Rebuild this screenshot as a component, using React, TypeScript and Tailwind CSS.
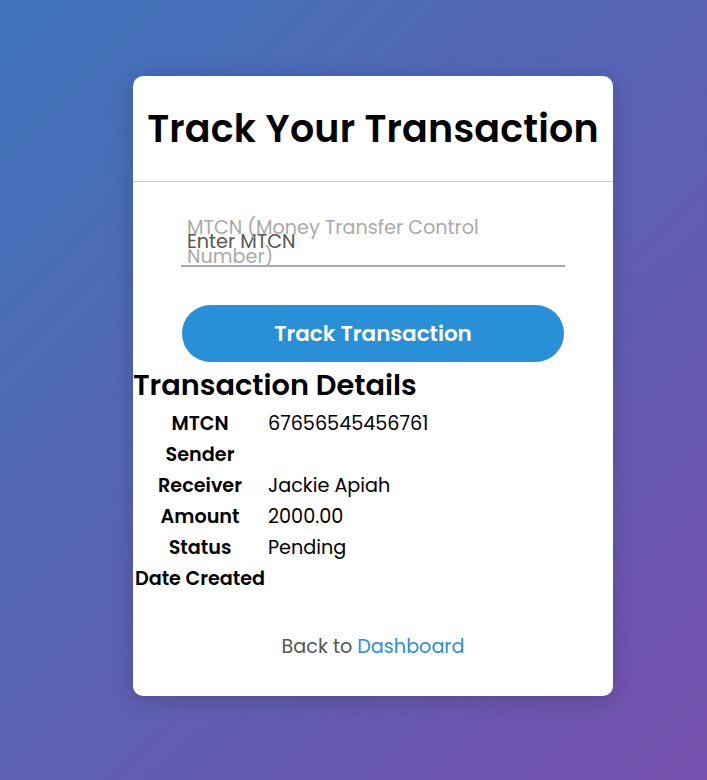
import React from "react";

const rows: [string, string][] = [
  ["MTCN", "67656545456761"],
  ["Sender", ""],
  ["Receiver", "Jackie Apiah"],
  ["Amount", "2000.00"],
  ["Status", "Pending"],
  ["Date Created", ""],
];

export default function App() {
  return (
    <div
      className="min-h-[780px] w-full flex justify-center pt-[76px] pl-[39px] bg-[linear-gradient(135deg,#3e74ba_0%,#7750ae_100%)]"
      style={{ fontFamily: "Poppins, Inter, 'Noto Sans', sans-serif" }}
    >
      <div className="w-[480px] h-[620px] bg-white rounded-[10px] shadow-[0_4px_24px_rgba(0,0,0,0.18)] flex flex-col">
        <div className="h-[106px] flex items-center justify-center border-b border-[#cccccc]">
          <h1 className="text-[38px] font-semibold text-black leading-[48px] tracking-[0.2px]">
            Track Your Transaction
          </h1>
        </div>

        <div className="px-12">
          <div className="relative mt-[24px]">
            <input
              type="text"
              placeholder="Enter MTCN"
              className="w-full h-[61px] pt-[22px] pb-[10px] px-[6px] border-b-2 border-[#aaaaaa] text-[19.2px] leading-[27px] outline-none placeholder:text-[#555555] bg-transparent"
            />
            <label className="absolute left-[6px] top-[7px] text-[19.2px] leading-[29px] text-[#aaaaaa] pointer-events-none">
              MTCN (Money Transfer Control
              <br />
              Number)
            </label>
          </div>

          <button className="mt-[38px] mx-[1px] w-[382px] h-[57px] pt-[2px] rounded-full bg-[#2990d8] text-white text-[21.5px] font-semibold">
            Track Transaction
          </button>
        </div>

        <h2 className="mt-[5px] text-[28.8px] leading-[36px] font-semibold text-black">
          Transaction Details
        </h2>

        <table className="mt-[5px] border-collapse">
          <tbody>
            {rows.map(([k, v]) => (
              <tr key={k} className="h-[31px]">
                <td className="w-[134px] text-center font-semibold text-[19.2px] leading-[27px] py-[2px] whitespace-nowrap text-black">
                  {k}
                </td>
                <td className="pl-[1px] text-[19.2px] leading-[27px] py-[2px] text-black">{v}</td>
              </tr>
            ))}
          </tbody>
        </table>

        <p className="mt-[39px] text-center text-[19.2px] leading-[27px] text-[#555555]">
          Back to <a className="text-[#2990d8]" href="#">Dashboard</a>
        </p>
      </div>
    </div>
  );
}
